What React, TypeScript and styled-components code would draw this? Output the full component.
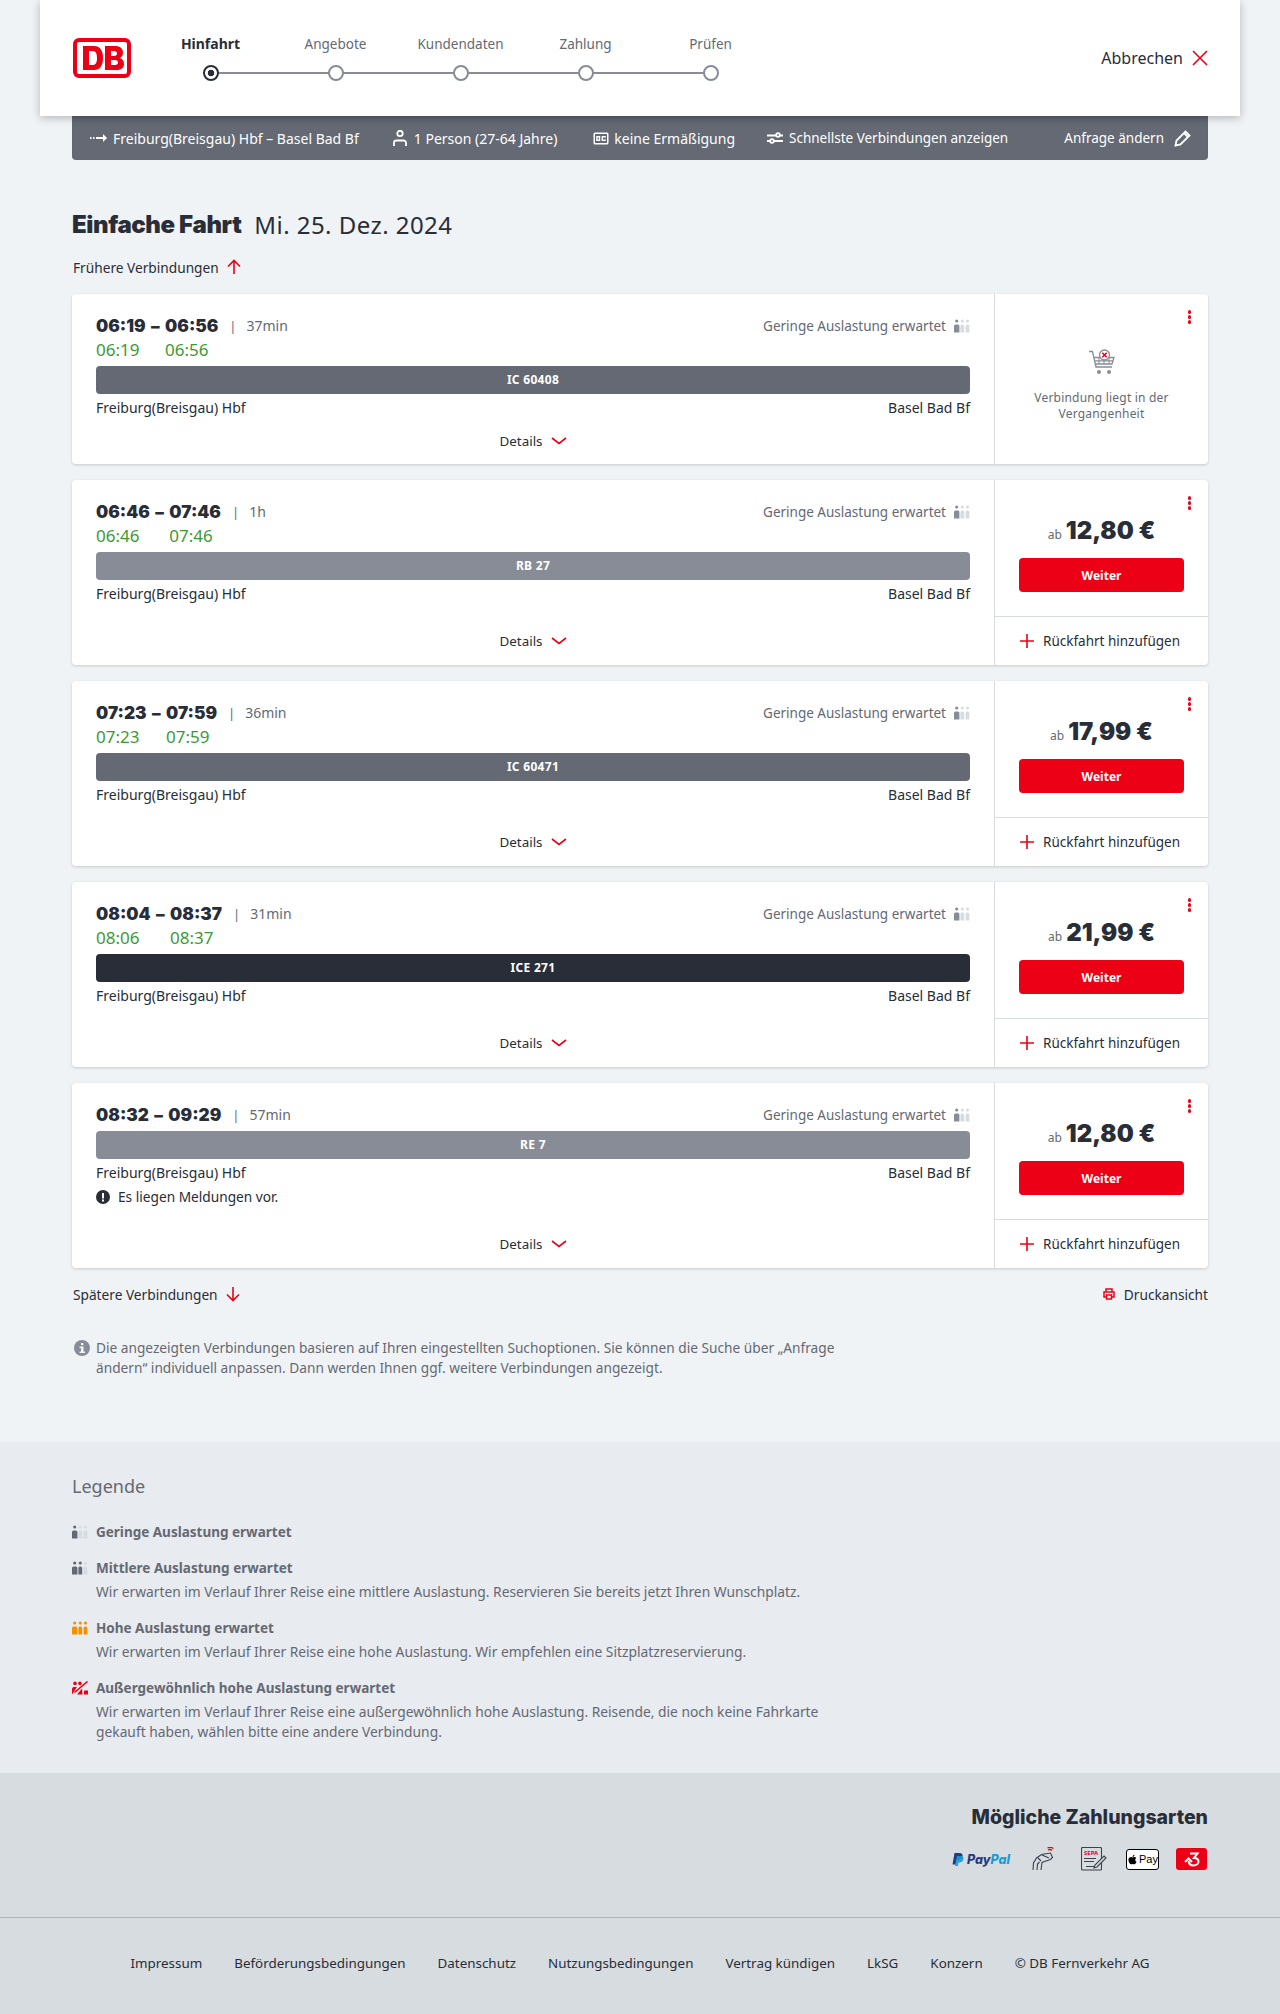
import { ReactNode } from 'react';
import styled, { createGlobalStyle } from 'styled-components';
import { FaApple } from 'react-icons/fa';

const red = '#ec0016';
const ink = '#282d37';
const grey = '#646973';
const midGrey = '#878c96';

const GlobalStyle = createGlobalStyle`
  html, body {
    margin: 0;
    background: #f0f3f5;
    font-family: "Noto Sans", "Open Sans", sans-serif;
    font-size: 14px;
    color: ${ink};
  }
  * { box-sizing: border-box; }
`;

const Head = styled.header`
  position: relative;
  z-index: 2;
  margin: 0 40px;
  height: 116px;
  background: #fff;
  box-shadow: 0 2px 8px rgba(40, 45, 55, 0.3);
  display: flex;
  align-items: center;
  padding: 0 32px 0 33px;
`;

const Stepper = styled.ol`
  list-style: none;
  margin: 0 0 2px 17px;
  padding: 0;
  display: grid;
  grid-template-columns: repeat(5, 125px);
`;

const Step = styled.li<{ $active?: boolean; $last?: boolean }>`
  position: relative;
  display: flex;
  flex-direction: column;
  align-items: center;
  gap: 11px;
  font-size: ${p => (p.$active ? 14 : 13.5)}px;
  line-height: 20px;
  font-weight: ${p => (p.$active ? 700 : 400)};
  color: ${p => (p.$active ? ink : grey)};
  &::after {
    content: '';
    display: ${p => (p.$last ? 'none' : 'block')};
    position: absolute;
    left: 50%;
    width: 100%;
    top: 38px;
    height: 2px;
    background: ${midGrey};
  }
`;

const Dot = styled.span<{ $active?: boolean }>`
  position: relative;
  z-index: 1;
  width: 16px;
  height: 16px;
  border-radius: 50%;
  background: ${p => (p.$active ? `radial-gradient(circle, ${ink} 0 3px, #fff 3.6px)` : '#fff')};
  border: 2px solid ${p => (p.$active ? ink : midGrey)};
`;

const Cancel = styled.div`
  margin-left: auto;
  display: flex;
  align-items: center;
  gap: 9px;
  font-size: 16px;
`;

const SearchBar = styled.div`
  margin: 0 72px;
  height: 44px;
  background: ${grey};
  color: #fff;
  border-radius: 0 0 4px 4px;
  display: flex;
  align-items: center;
  padding: 0 17px 0 18px;
  font-size: 14px;
  box-shadow: inset 0 5px 5px -4px rgba(40, 45, 55, 0.4);
`;

const SearchItem = styled.div<{ $gap: number; $after?: number; $tight?: boolean }>`
  display: flex;
  align-items: center;
  gap: ${p => p.$gap}px;
  margin-right: ${p => p.$after ?? 0}px;
  white-space: nowrap;
  font-size: ${p => (p.$tight ? 13.5 : 14)}px;
`;

const SearchAction = styled(SearchItem)`
  margin-left: auto;
`;

const Main = styled.main`
  padding: 0 72px 64px;
`;

const Title = styled.h1`
  margin: 48px 0 0;
  font-size: 24px;
  line-height: 34px;
  font-weight: 400;
  letter-spacing: 0.45px;
  display: flex;
  gap: 13px;
`;

const TitleStrong = styled.span`
  font-family: Inter, sans-serif;
  font-weight: 900;
  letter-spacing: -0.4px;
`;

const MoreLink = styled.div`
  display: flex;
  align-items: center;
  gap: 7px;
  height: 20px;
  padding-left: 1px;
  font-size: 13.7px;
`;

const Earlier = styled(MoreLink)`
  margin: 15px 0 17px;
`;

const Cards = styled.div`
  display: flex;
  flex-direction: column;
  gap: 16px;
`;

const Card = styled.article<{ $short?: boolean }>`
  display: grid;
  grid-template-columns: 1fr 214px;
  height: ${p => (p.$short ? 170 : 185)}px;
  background: #fff;
  border-radius: 4px;
  box-shadow: 0 1px 3px rgba(40, 45, 55, 0.2);
`;

const Journey = styled.section`
  display: flex;
  flex-direction: column;
  padding: 20px 24px 0;
  min-width: 0;
`;

const TopRow = styled.div`
  display: flex;
  justify-content: space-between;
  align-items: flex-start;
`;

const Times = styled.div`
  display: inline-grid;
  grid-template-columns: auto auto auto auto;
  justify-content: start;
  align-items: center;
`;

const Planned = styled.span`
  font-family: Inter, sans-serif;
  font-weight: 900;
  font-size: 17.2px;
  line-height: 24px;
  white-space: pre;
`;

const Dash = styled(Planned)`
  padding: 0 2px;
`;

const Duration = styled.span`
  font-size: 14px;
  line-height: 24px;
  color: ${grey};
  margin-left: 11px;
  &::before {
    content: '|';
    margin-right: 10px;
    font-size: 13px;
  }
`;

const Actual = styled.span<{ $col: number }>`
  font-size: 17px;
  line-height: 24px;
  color: #3d9a33;
  grid-row: 2;
  grid-column: ${p => p.$col};
`;

const Load = styled.div`
  display: flex;
  align-items: center;
  gap: 8px;
  color: ${grey};
  font-size: 13.5px;
  line-height: 24px;
`;

const TrainBar = styled.div<{ $color: string }>`
  height: 28px;
  margin-top: 4px;
  background: ${p => p.$color};
  border-radius: 4px;
  color: #fff;
  font-size: 12px;
  font-weight: 700;
  display: flex;
  align-items: center;
  justify-content: center;
  letter-spacing: 0.3px;
  padding-bottom: 1px;
`;

const Stations = styled.div`
  display: flex;
  justify-content: space-between;
  line-height: 20px;
  margin-top: 4px;
`;

const Notice = styled.div`
  display: flex;
  align-items: center;
  gap: 8px;
  line-height: 20px;
  margin-top: 4px;
  font-size: 13.7px;
`;

const DetailsRow = styled.div`
  margin-top: auto;
  height: 47px;
  display: flex;
  align-items: center;
  justify-content: center;
  gap: 8px;
  padding-bottom: 1px;
  font-size: 13.4px;
`;

const Offer = styled.section`
  position: relative;
  border-left: 1px solid #d7dce1;
  display: flex;
  flex-direction: column;
`;

const Kebab = styled.span`
  position: absolute;
  top: 16px;
  right: 17px;
  display: flex;
  flex-direction: column;
  gap: 1.500px;
  i {
    width: 3.500px;
    height: 3.500px;
    border-radius: 50%;
    background: ${red};
  }
`;

const Buy = styled.div`
  flex: 1;
  padding: 36px 24px 0;
  display: flex;
  flex-direction: column;
  align-items: center;
  border-bottom: 1px solid #d7dce1;
`;

const Price = styled.div`
  display: flex;
  align-items: baseline;
  gap: 4px;
  font-family: Inter, sans-serif;
  font-weight: 900;
  font-size: 24px;
  line-height: 30px;
`;

const From = styled.span`
  font-family: "Noto Sans", sans-serif;
  font-weight: 400;
  font-size: 12px;
  color: ${grey};
`;

const Next = styled.button`
  width: 100%;
  height: 34px;
  margin-top: 8px;
  border: 0;
  border-radius: 4px;
  background: ${red};
  color: #fff;
  font: 700 12px "Noto Sans", sans-serif;
`;

const AddReturn = styled.div`
  height: 48px;
  display: flex;
  align-items: center;
  gap: 8px;
  padding-left: 24px;
  white-space: nowrap;
  font-size: 13.5px;
`;

const Past = styled.div`
  display: flex;
  flex-direction: column;
  align-items: center;
  padding: 55px 24px 0;
  text-align: center;
  font-size: 12px;
  line-height: 16px;
  letter-spacing: 0.2px;
  color: ${grey};
`;

const PastText = styled.p`
  margin: 15px 0 0;
`;

const ListFoot = styled.div`
  display: flex;
  justify-content: space-between;
  margin-top: 16px;
`;

const Print = styled.div`
  display: flex;
  align-items: center;
  gap: 9px;
  height: 20px;
  font-size: 13.7px;
`;

const Hint = styled.div`
  display: flex;
  gap: 6px;
  margin-top: 34px;
  color: ${grey};
  line-height: 20px;
  font-size: 13.7px;
  max-width: 800px;
  padding-left: 2px;
`;

const HintText = styled.p`
  margin: 0;
`;

const IconBox = styled.span`
  flex: none;
  display: flex;
  align-items: center;
  height: 20px;
`;

const Legend = styled.section`
  background: #e8ebef;
  height: 331px;
  padding: 31px 72px 0;
  color: ${grey};
`;

const LegendTitle = styled.h2`
  margin: 0 0 23px;
  font-size: 18px;
  font-weight: 400;
  line-height: 26px;
`;

const LegendItem = styled.div`
  display: grid;
  grid-template-columns: 16px 1fr;
  column-gap: 8px;
  line-height: 20px;
  max-width: 780px;
  margin-bottom: 16px;
`;

const LegendName = styled.strong`
  font-weight: 700;
  font-size: 13.5px;
`;

const LegendText = styled.p`
  grid-column: 2;
  margin: 4px 0 0;
  font-size: 13.8px;
`;

const Payment = styled.section`
  height: 145px;
  background: #d7dce1;
  border-bottom: 1px solid #afb4bb;
  padding: 32px 72px 0 32px;
  display: flex;
  flex-direction: column;
  align-items: flex-end;
`;

const PaymentTitle = styled.h2`
  margin: 0;
  font-family: Inter, sans-serif;
  font-size: 19.5px;
  font-weight: 800;
  line-height: 24px;
`;

const PaymentIcons = styled.div`
  display: flex;
  align-items: center;
  height: 24px;
  margin-top: 18px;
  padding-right: 1px;
`;

const PaySlot = styled.span<{ $after: number }>`
  display: flex;
  margin-right: ${p => p.$after}px;
`;

const PayPal = styled.span`
  display: flex;
  align-items: center;
  gap: 3px;
  font: italic 800 12.5px Inter, sans-serif;
  color: #253b80;
  b { color: #179bd7; font-weight: 800; }
`;

const ApplePay = styled.span`
  width: 33px;
  height: 21px;
  border: 1px solid #000;
  border-radius: 3px;
  background: #fff;
  color: #000;
  font: 500 11px "Liberation Sans", sans-serif;
  display: flex;
  align-items: center;
  justify-content: center;
  gap: 1px;
`;

const RedCard = styled.span`
  width: 31px;
  height: 22px;
  border-radius: 3px;
  background: ${red};
  display: flex;
  align-items: center;
  justify-content: center;
`;

const Footer = styled.footer`
  height: 96px;
  background: #d7dce1;
  display: flex;
  justify-content: center;
  align-items: center;
  gap: 32px;
  padding-bottom: 7px;
  font-size: 13.4px;
`;

const Stroke = ({ size = 16, color = red, w = 1.6, children }: { size?: number; color?: string; w?: number; children: ReactNode }) => (
  <svg width={size} height={size} viewBox="0 0 16 16" fill="none" stroke={color} strokeWidth={w}>
    {children}
  </svg>
);

const UpArrow = () => <Stroke><path d="M8 15V1.5M2 7.5l6-6 6 6" /></Stroke>;
const DownArrow = () => <Stroke><path d="M8 1v13.5M2 8.5l6 6 6-6" /></Stroke>;
const Chevron = () => <Stroke><path d="M1 5l7 5.5L15 5" /></Stroke>;
const Cross = () => <Stroke><path d="M1 1l14 14M15 1L1 15" /></Stroke>;
const PlusIcon = () => <Stroke><path d="M8 1v14M1 8h14" /></Stroke>;

const LoadIcon = ({ level, color = grey }: { level: number; color?: string }) => (
  <svg width="16" height="14" viewBox="0 0 16 14">
    {[0, 1, 2].map(i => {
      const on = i < level;
      const w = i === 0 ? 5.4 : 3.8;
      const x = i === 0 ? 0 : i === 1 ? 6.4 : 11.6;
      return (
        <g key={i} fill={on ? color : '#d7dce1'}>
          <circle cx={x + w / 2} cy="2" r="1.6" />
          <path d={`M${x} 13.5V7a1.5 1.5 0 0 1 1.5-1.5h${w - 3}A1.5 1.5 0 0 1 ${x + w} 7v6.5z`} />
        </g>
      );
    })}
  </svg>
);

const ExtremeLoadIcon = () => (
  <svg width="16" height="14" viewBox="0 0 16 14">
    <g fill={red}>
      <circle cx="3" cy="2.4" r="1.8" />
      <circle cx="8" cy="2.4" r="1.8" />
      <path d="M0 13.5V8a2 2 0 0 1 2-2h3L0 13.5zM5 13.5l5-6 .5 6zM12 9.5h4v4h-4z" />
      <path d="M15.5 .5l-13 11" stroke={red} strokeWidth="1.6" />
    </g>
  </svg>
);

const CartIcon = () => (
  <svg width="26" height="26" viewBox="0 0 26 26" fill="none" stroke={midGrey} strokeWidth="1.300">
    <path d="M0 2.500h3.500L7 18h16M5 8.500h20l-2 6.500H6.500M6 11.800h18" />
    <path d="M10 8v7M15 8v7M20 8v7" strokeWidth="1" />
    <circle cx="15.500" cy="6" r="5" fill="#fff" />
    <path d="M13.300 3.800l4.400 4.400M17.700 3.800l-4.400 4.400" stroke={red} strokeWidth="1.600" />
    <circle cx="10" cy="23" r="2" fill={midGrey} stroke="none" />
    <circle cx="20" cy="23" r="2" fill={midGrey} stroke="none" />
  </svg>
);

const DbLogo = () => (
  <svg width="58" height="40" viewBox="0 0 58 40">
    <rect x="2" y="2" width="54" height="36" rx="4" fill="#fff" stroke={red} strokeWidth="4" />
    <path fill={red} fillRule="evenodd" d="M10 8h11c6 0 9 4.500 9 12s-3 12-9 12H10zM16 13v14h4c3 0 4-3 4-7s-1-7-4-7zM32 8h10c5 0 8 2.500 8 6.500 0 2.500-1 4.500-3 5.500 2.500 1 4 3 4 6 0 4-3 6-8 6H32zM38 13v5h3c2 0 3-1 3-2.500S43 13 41 13zM38 22v5h4c2 0 3-1 3-2.500S44 22 42 22z" />
  </svg>
);

const PersonIcon = () => (
  <svg width="14" height="16" viewBox="0 0 14 16" fill="none" stroke="#fff" strokeWidth="1.800">
    <circle cx="7" cy="3.500" r="2.700" />
    <path d="M1 16v-3a2.500 2.500 0 0 1 2.500-2.500h7A2.500 2.500 0 0 1 13 13v3" />
  </svg>
);

const RouteIcon = () => (
  <svg width="17" height="12" viewBox="0 0 17 12" fill="#fff">
    <rect x="0" y="5" width="1.500" height="2" />
    <rect x="3" y="5" width="1.500" height="2" />
    <path d="M6 5h7V2l4 4-4 4V7H6z" />
  </svg>
);

const BahnCardIcon = () => (
  <svg width="16" height="13" viewBox="0 0 16 13">
    <rect x="0.500" y="0.500" width="15" height="12" rx="1.500" fill="#fff" />
    <rect x="2" y="2" width="12" height="9" fill={grey} />
    <rect x="3.200" y="4" width="4" height="5" fill="#fff" />
    <rect x="8.600" y="4" width="4.200" height="5" fill="#fff" />
    <rect x="4.600" y="5.500" width="1.300" height="2" fill={grey} />
    <rect x="10" y="5.500" width="2.800" height="2" fill={grey} />
  </svg>
);

const FilterIcon = () => (
  <svg width="16" height="14" viewBox="0 0 16 14" fill="none" stroke="#fff" strokeWidth="1.800">
    <path d="M0 4.500h9M13 4.500h3M0 10h3M7 10h9" />
    <circle cx="11" cy="4" r="1.800" />
    <circle cx="5" cy="10" r="1.800" />
  </svg>
);

const PencilIcon = () => (
  <svg width="17" height="17" viewBox="0 0 17 17" fill="none" stroke="#fff" strokeWidth="1.800">
    <path d="M1.500 15.500l1-5L11.500 1.500l4 4-9 9z" />
    <path d="M10 3l4 4" />
  </svg>
);

const AlertIcon = () => (
  <svg width="14" height="14" viewBox="0 0 14 14">
    <circle cx="7" cy="7" r="7" fill={ink} />
    <rect x="6" y="3" width="2" height="5.500" fill="#fff" />
    <rect x="6" y="9.500" width="2" height="2" fill="#fff" />
  </svg>
);

const InfoIcon = () => (
  <svg width="16" height="16" viewBox="0 0 16 16">
    <circle cx="8" cy="8" r="8" fill={midGrey} />
    <rect x="7" y="3" width="2.400" height="2.200" fill="#f0f3f5" />
    <path d="M5.500 6.500h4v5h1.500V13H5.500v-1.500H7V8H5.500z" fill="#f0f3f5" />
  </svg>
);

const PrintIcon = () => (
  <svg width="12" height="12" viewBox="0 0 12 12" fill="none" stroke={red} strokeWidth="1.500">
    <path d="M3 3.500V1h6v2.500M3 9H1V4h10v5H9" />
    <rect x="3.500" y="7" width="5" height="4" />
  </svg>
);

const PayPalMark = () => (
  <svg width="12" height="13" viewBox="0 0 12 13">
    <path fill="#253b80" d="M2.500 0h5c2.500 0 3.500 1.500 3 3.500C10 6 8 7 6 7H4.500L3.500 11.500H0.500z" />
    <path fill="#179bd7" d="M5 3h4c1.500 0 3 1 2.500 3-.5 2.500-2 3.500-4 3.500H6.500L6 13H3z" opacity=".9" />
  </svg>
);

const ContactlessIcon = () => (
  <svg width="23" height="24" viewBox="0 0 23 24" fill="none" stroke="#3c414b" strokeWidth="1.100">
    <path d="M1 23l.5-7 3-5 5-3.500 9-1.500 2 4.500-2 2-6 2-2.500 1-1 7.500M5 23l.5-6 2-2M6 11l3 3M10 8l7 3" />
    <path d="M16 3a3.500 3.500 0 0 1 4 .5M15.500 1a6 6 0 0 1 6 .5" stroke={red} strokeWidth="1.300" />
  </svg>
);

const SepaIcon = () => (
  <svg width="27" height="24" viewBox="0 0 27 24" fill="none" stroke="#3c414b" strokeWidth="1.100">
    <rect x="0.500" y="0.500" width="20" height="22.500" rx="1" />
    <text x="3" y="7.500" fontSize="6" fontWeight="700" fill={red} stroke="none" fontFamily="Noto Sans, sans-serif">SEPA</text>
    <path d="M3 11.500h12M3 14.500h10M5 19.500h8" />
    <path d="M14 18l-1 3 3-1 9-9-2-2z" fill="#d7dce1" />
  </svg>
);

const RedCardIcon = () => (
  <svg width="16" height="15" viewBox="0 0 16 15" fill="none" stroke="#fff" strokeWidth="2">
    <path d="M6 1.500h7.500L10 6c3 0 4.500 1.300 4.500 3.500S12.500 13.500 9.500 13.500 5 12.500 4.500 9" />
    <path d="M1 10l3.500-3.500L8 10" />
  </svg>
);

type Train = {
  dep: string;
  arr: string;
  duration: string;
  actualDep?: string;
  actualArr?: string;
  train: string;
  color: string;
  price?: string;
  notice?: boolean;
};

const trains: Train[] = [
  { dep: '06:19', arr: '06:56', duration: '37min', actualDep: '06:19', actualArr: '06:56', train: 'IC 60408', color: '#646973' },
  { dep: '06:46', arr: '07:46', duration: '1h', actualDep: '06:46', actualArr: '07:46', train: 'RB 27', color: '#878c96', price: '12,80 €' },
  { dep: '07:23', arr: '07:59', duration: '36min', actualDep: '07:23', actualArr: '07:59', train: 'IC 60471', color: '#646973', price: '17,99 €' },
  { dep: '08:04', arr: '08:37', duration: '31min', actualDep: '08:06', actualArr: '08:37', train: 'ICE 271', color: '#282d37', price: '21,99 €' },
  { dep: '08:32', arr: '09:29', duration: '57min', train: 'RE 7', color: '#878c96', price: '12,80 €', notice: true },
];

const steps = ['Hinfahrt', 'Angebote', 'Kundendaten', 'Zahlung', 'Prüfen'];

const footerLinks = [
  'Impressum',
  'Beförderungsbedingungen',
  'Datenschutz',
  'Nutzungsbedingungen',
  'Vertrag kündigen',
  'LkSG',
  'Konzern',
  '© DB Fernverkehr AG',
];

const TrainCard = ({ t }: { t: Train }) => (
  <Card $short={!t.price}>
    <Journey>
      <TopRow>
        <Times>
          <Planned>{t.dep}</Planned>
          <Dash> – </Dash>
          <Planned>{t.arr}</Planned>
          <Duration>{t.duration}</Duration>
          {t.actualDep && <Actual $col={1}>{t.actualDep}</Actual>}
          {t.actualArr && <Actual $col={3}>{t.actualArr}</Actual>}
        </Times>
        <Load>
          Geringe Auslastung erwartet
          <LoadIcon level={1} color={midGrey} />
        </Load>
      </TopRow>
      <TrainBar $color={t.color}>{t.train}</TrainBar>
      <Stations>
        <span>Freiburg(Breisgau) Hbf</span>
        <span>Basel Bad Bf</span>
      </Stations>
      {t.notice && (
        <Notice>
          <AlertIcon />
          Es liegen Meldungen vor.
        </Notice>
      )}
      <DetailsRow>
        Details
        <Chevron />
      </DetailsRow>
    </Journey>
    <Offer>
      <Kebab>
        <i />
        <i />
        <i />
      </Kebab>
      {t.price ? (
        <>
          <Buy>
            <Price>
              <From>ab</From>
              {t.price}
            </Price>
            <Next>Weiter</Next>
          </Buy>
          <AddReturn>
            <PlusIcon />
            Rückfahrt hinzufügen
          </AddReturn>
        </>
      ) : (
        <Past>
          <CartIcon />
          <PastText>Verbindung liegt in der Vergangenheit</PastText>
        </Past>
      )}
    </Offer>
  </Card>
);

export default function App() {
  return (
    <>
      <GlobalStyle />
      <Head>
        <DbLogo />
        <Stepper>
          {steps.map((s, i) => (
            <Step key={s} $active={i === 0} $last={i === steps.length - 1}>
              {s}
              <Dot $active={i === 0} />
            </Step>
          ))}
        </Stepper>
        <Cancel>
          Abbrechen
          <Cross />
        </Cancel>
      </Head>
      <SearchBar>
        <SearchItem $gap={6} $after={34}>
          <RouteIcon />
          Freiburg(Breisgau) Hbf – Basel Bad Bf
        </SearchItem>
        <SearchItem $gap={7} $after={36}>
          <PersonIcon />
          1 Person (27-64 Jahre)
        </SearchItem>
        <SearchItem $gap={5} $after={32}>
          <BahnCardIcon />
          keine Ermäßigung
        </SearchItem>
        <SearchItem $gap={6} $tight>
          <FilterIcon />
          Schnellste Verbindungen anzeigen
        </SearchItem>
        <SearchAction $gap={10} $tight>
          Anfrage ändern
          <PencilIcon />
        </SearchAction>
      </SearchBar>
      <Main>
        <Title>
          <TitleStrong>Einfache Fahrt</TitleStrong>
          Mi. 25. Dez. 2024
        </Title>
        <Earlier>
          Frühere Verbindungen
          <UpArrow />
        </Earlier>
        <Cards>
          {trains.map(t => (
            <TrainCard key={t.dep} t={t} />
          ))}
        </Cards>
        <ListFoot>
          <MoreLink>
            Spätere Verbindungen
            <DownArrow />
          </MoreLink>
          <Print>
            <PrintIcon />
            Druckansicht
          </Print>
        </ListFoot>
        <Hint>
          <IconBox>
            <InfoIcon />
          </IconBox>
          <HintText>
            Die angezeigten Verbindungen basieren auf Ihren eingestellten Suchoptionen. Sie können die Suche über „Anfrage ändern“ individuell anpassen. Dann werden Ihnen ggf. weitere Verbindungen angezeigt.
          </HintText>
        </Hint>
      </Main>
      <Legend>
        <LegendTitle>Legende</LegendTitle>
        <LegendItem>
          <IconBox><LoadIcon level={1} /></IconBox>
          <LegendName>Geringe Auslastung erwartet</LegendName>
        </LegendItem>
        <LegendItem>
          <IconBox><LoadIcon level={2} /></IconBox>
          <LegendName>Mittlere Auslastung erwartet</LegendName>
          <LegendText>Wir erwarten im Verlauf Ihrer Reise eine mittlere Auslastung. Reservieren Sie bereits jetzt Ihren Wunschplatz.</LegendText>
        </LegendItem>
        <LegendItem>
          <IconBox><LoadIcon level={3} color="#f39200" /></IconBox>
          <LegendName>Hohe Auslastung erwartet</LegendName>
          <LegendText>Wir erwarten im Verlauf Ihrer Reise eine hohe Auslastung. Wir empfehlen eine Sitzplatzreservierung.</LegendText>
        </LegendItem>
        <LegendItem>
          <IconBox><ExtremeLoadIcon /></IconBox>
          <LegendName>Außergewöhnlich hohe Auslastung erwartet</LegendName>
          <LegendText>Wir erwarten im Verlauf Ihrer Reise eine außergewöhnlich hohe Auslastung. Reisende, die noch keine Fahrkarte gekauft haben, wählen bitte eine andere Verbindung.</LegendText>
        </LegendItem>
      </Legend>
      <Payment>
        <PaymentTitle>Mögliche Zahlungsarten</PaymentTitle>
        <PaymentIcons>
          <PaySlot $after={22}>
            <PayPal>
              <PayPalMark />
              <span>Pay<b>Pal</b></span>
            </PayPal>
          </PaySlot>
          <PaySlot $after={26}><ContactlessIcon /></PaySlot>
          <PaySlot $after={18}><SepaIcon /></PaySlot>
          <PaySlot $after={17}>
            <ApplePay>
              <FaApple size={11} />
              Pay
            </ApplePay>
          </PaySlot>
          <RedCard><RedCardIcon /></RedCard>
        </PaymentIcons>
      </Payment>
      <Footer>
        {footerLinks.map(l => (
          <span key={l}>{l}</span>
        ))}
      </Footer>
    </>
  );
}
